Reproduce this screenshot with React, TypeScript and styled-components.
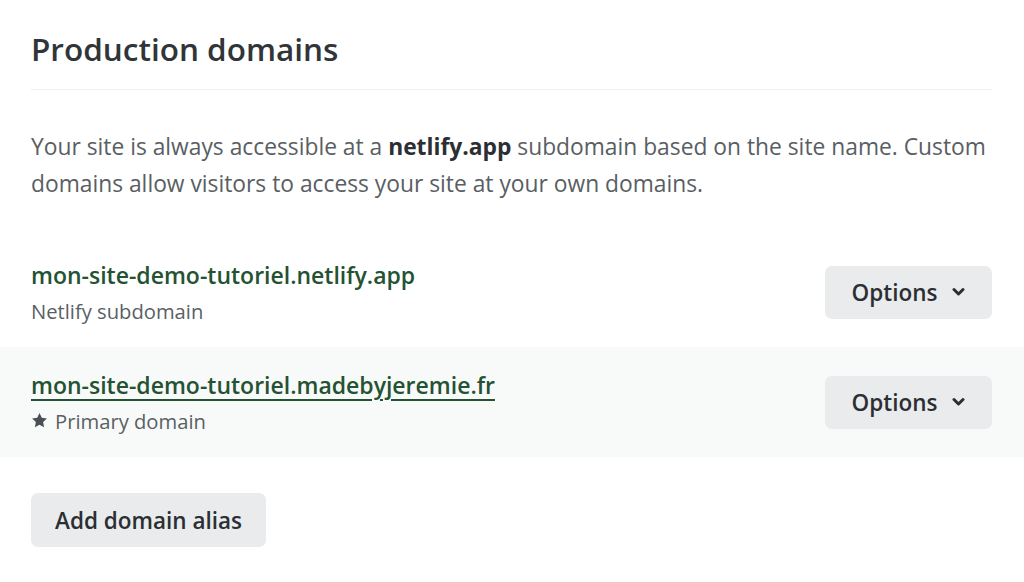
import React from "react";
import styled, { createGlobalStyle } from "styled-components";

const Global = createGlobalStyle`
  html, body { margin: 0; padding: 0; background: #ffffff; }
  body { font-family: "Open Sans", "Noto Sans", sans-serif; color: #2e3338; }
`;

const Page = styled.div`
  width: 1024px;
  padding-top: 27px;
`;

const Header = styled.div`
  margin: 0 32px 0 31px;
  padding-bottom: 18px;
  border-bottom: 1px solid #eeeff0;
`;

const Title = styled.h2`
  margin: 0;
  font-size: 31.5px;
  font-weight: 600;
  line-height: 44px;
  color: #30353a;
`;

const Description = styled.p`
  margin: 0;
  padding: 38px 31px 35px;
  font-size: 22.8px;
  line-height: 37px;
  color: #595e63;
  white-space: nowrap;
  b { font-weight: 700; color: #2b2f33; }
`;

const Row = styled.div<{ $shaded?: boolean }>`
  display: flex;
  align-items: center;
  justify-content: space-between;
  height: 110px;
  padding: 0 32px 0 31px;
  box-sizing: border-box;
  background: ${(p) => (p.$shaded ? "#f8faf9" : "#ffffff")};
`;

const Info = styled.div`
  display: flex;
  flex-direction: column;
  gap: 7px;
`;

const Domain = styled.a<{ $underline?: boolean }>`
  font-size: 23px;
  line-height: 30px;
  font-weight: 600;
  color: #245232;
  text-decoration: ${(p) => (p.$underline ? "underline" : "none")};
  text-underline-offset: 5px;
  text-decoration-thickness: 1.5px;
`;

const Sub = styled.div`
  display: flex;
  align-items: center;
  gap: 7px;
  font-size: 20.2px;
  line-height: 28px;
  color: #5a5f64;
`;

const Button = styled.button`
  display: inline-flex;
  align-items: center;
  gap: 15px;
  height: 54px;
  padding: 0 24px;
  border: none;
  border-radius: 7px;
  background: #e9ebed;
  font-family: "Open Sans", "Noto Sans", sans-serif;
  font-size: 22.5px;
  font-weight: 600;
  color: #2b2f33;
  cursor: pointer;
`;

const OptionsButton = styled(Button)`
  width: 167px;
  height: 53px;
  justify-content: center;
`;

const Footer = styled.div`
  padding: 36px 31px 0;
`;

const Chevron = () => (
  <svg width="13" height="10" viewBox="0 0 13 10" aria-hidden="true">
    <path d="M2 2.5 L6.5 7 L11 2.5" fill="none" stroke="#2b2f33" strokeWidth="3" strokeLinecap="round" strokeLinejoin="round" />
  </svg>
);

const Star = () => (
  <svg width="17" height="17" viewBox="0 0 24 24" aria-hidden="true">
    <path d="M12 1.5l3.2 6.7 7.3.9-5.4 5.1 1.4 7.3L12 17.9l-6.5 3.6 1.4-7.3-5.4-5.1 7.3-.9z" fill="#4a4f55" />
  </svg>
);

export default function App() {
  return (
    <>
      <Global />
      <Page>
        <Header>
          <Title>Production domains</Title>
        </Header>
        <Description>
          Your site is always accessible at a <b>netlify.app</b> subdomain based on the site name. Custom
          <br />
          domains allow visitors to access your site at your own domains.
        </Description>
        <Row>
          <Info>
            <Domain>mon-site-demo-tutoriel.netlify.app</Domain>
            <Sub>Netlify subdomain</Sub>
          </Info>
          <OptionsButton>
            Options <Chevron />
          </OptionsButton>
        </Row>
        <Row $shaded>
          <Info>
            <Domain $underline href="#">mon-site-demo-tutoriel.madebyjeremie.fr</Domain>
            <Sub>
              <Star />
              Primary domain
            </Sub>
          </Info>
          <OptionsButton>
            Options <Chevron />
          </OptionsButton>
        </Row>
        <Footer>
          <Button>Add domain alias</Button>
        </Footer>
      </Page>
    </>
  );
}
